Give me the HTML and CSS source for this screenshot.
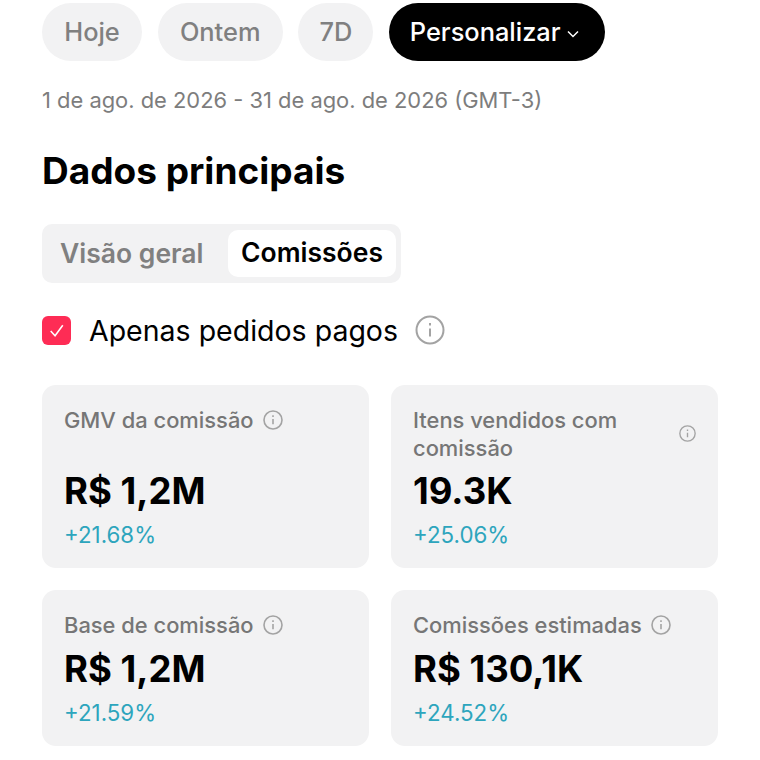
FILE: index.html
```html
<!DOCTYPE html>
<html lang="pt-BR">

<head>
    <meta charset="UTF-8">
    <meta name="viewport" content="width=device-width, initial-scale=1.0">
    <title>Dados principais</title>
    <link rel="stylesheet" href="styles.css">
</head>

<body>
    <main>
        <div class="pills">
            <button class="pill pill-hoje">Hoje</button>
            <button class="pill pill-ontem">Ontem</button>
            <button class="pill pill-7d">7D</button>
            <button class="pill pill-active">Personalizar
                <svg class="chevron" viewBox="0 0 12 8"><path d="M1 1.5l5 5 5-5" /></svg>
            </button>
        </div>

        <p class="range">1 de ago. de 2026 - 31 de ago. de 2026 (GMT-3)</p>

        <h1>Dados principais</h1>

        <div class="tabs">
            <span class="tab">Visão geral</span>
            <span class="tab tab-active">Comissões</span>
        </div>

        <div class="paid">
            <span class="check">
                <svg viewBox="0 0 30 30"><path d="M9 15.5l4.5 5L21.5 9.5" /></svg>
            </span>
            <span class="paid-label">Apenas pedidos pagos</span>
            <svg class="info info-big" viewBox="0 0 30 30">
                <circle cx="15" cy="15" r="13.5" />
                <path d="M15 13.5v8M15 8v2.4" />
            </svg>
        </div>

        <div class="cards">
            <div class="card card-tall">
                <div class="card-title">
                    <span>GMV da comissão</span>
                    <svg class="info" viewBox="0 0 30 30"><circle cx="15" cy="15" r="13.5" /><path d="M15 13.5v8M15 8v2.4" /></svg>
                </div>
                <div class="value value-low">R$ 1,2M</div>
                <div class="delta">+21.68%</div>
            </div>
            <div class="card card-tall">
                <div class="card-title">
                    <span>Itens vendidos com comissão</span>
                    <svg class="info info-small" viewBox="0 0 30 30"><circle cx="15" cy="15" r="13.5" /><path d="M15 13.5v8M15 8v2.4" /></svg>
                </div>
                <div class="value">19.3K</div>
                <div class="delta">+25.06%</div>
            </div>
            <div class="card">
                <div class="card-title">
                    <span>Base de comissão</span>
                    <svg class="info" viewBox="0 0 30 30"><circle cx="15" cy="15" r="13.5" /><path d="M15 13.5v8M15 8v2.4" /></svg>
                </div>
                <div class="value">R$ 1,2M</div>
                <div class="delta">+21.59%</div>
            </div>
            <div class="card">
                <div class="card-title">
                    <span>Comissões estimadas</span>
                    <svg class="info" viewBox="0 0 30 30"><circle cx="15" cy="15" r="13.5" /><path d="M15 13.5v8M15 8v2.4" /></svg>
                </div>
                <div class="value">R$ 130,1K</div>
                <div class="delta">+24.52%</div>
            </div>
        </div>
    </main>
</body>

</html>
```

FILE: styles.css
```css
body {
    margin: 0;
    background: #fff;
    color: #000;
    font-family: "Inter", "Liberation Sans", sans-serif;
}

main {
    width: 677px;
    padding: 3px 0 0 42px;
}

.pills {
    display: flex;
    gap: 15.7px;
}

.pill {
    height: 58px;
    padding: 0 0 2px;
    border: none;
    border-radius: 29px;
    background: #f2f2f3;
    color: #808080;
    font-family: inherit;
    font-size: 25.4px;
    font-weight: 500;
}

.pill-hoje {
    width: 100px;
}

.pill-ontem {
    width: 125px;
}

.pill-7d {
    width: 75px;
}

.pill-active {
    width: 216px;
    padding-right: 5px;
    background: #000;
    color: #fff;
}

.chevron {
    width: 12px;
    height: 8px;
    vertical-align: 3px;
    fill: none;
    stroke: #fff;
    stroke-width: 1.5;
}

.range {
    margin: 26px 0 0;
    color: #7d7d7d;
    font-size: 21.9px;
    line-height: 26px;
}

h1 {
    margin: 36px 0 0;
    font-size: 37px;
    line-height: 44px;
    font-weight: 700;
}

.tabs {
    display: flex;
    align-items: center;
    justify-content: space-between;
    width: 359px;
    height: 59px;
    box-sizing: border-box;
    margin-top: 31px;
    padding: 0 5px 0 18px;
    border-radius: 10px;
    background: #f2f2f3;
}

.tab {
    padding-bottom: 2px;
    color: #808080;
    font-size: 26.5px;
    font-weight: 600;
}

.tab-active {
    box-sizing: border-box;
    width: 168px;
    height: 47px;
    border-radius: 10px;
    background: #fff;
    color: #000;
    line-height: 45px;
    text-align: center;
}

.paid {
    display: flex;
    align-items: center;
    height: 30px;
    margin-top: 32px;
}

.check {
    display: flex;
    width: 29px;
    height: 29px;
    border-radius: 6px;
    background: #fe2c55;
}

.check svg {
    fill: none;
    stroke: #fff;
    stroke-width: 1.6;
}

.paid-label {
    margin-left: 18px;
    font-size: 28.5px;
}

.info {
    flex: none;
    width: 20px;
    height: 20px;
    margin-left: 9px;
    fill: none;
    stroke: #a3a3a3;
    stroke-width: 2.4;
}

.info-big {
    width: 30px;
    height: 30px;
    margin-left: 17px;
    stroke-width: 2;
}

.info-small {
    width: 17px;
    height: 17px;
    margin: 0 0 2px 46px;
}

.cards {
    display: grid;
    grid-template-columns: 327px 327px;
    grid-template-rows: 183px 156px;
    gap: 22px;
    margin-top: 40px;
}

.card {
    box-sizing: border-box;
    padding: 21px 22px 0;
    border-radius: 14px;
    background: #f2f2f3;
}

.card-title {
    display: flex;
    align-items: center;
    min-height: 28px;
    color: #767676;
    font-size: 21.9px;
    font-weight: 500;
    line-height: 28px;
}

.value {
    margin-top: 8px;
    font-size: 36.5px;
    font-weight: 700;
    line-height: 44px;
}

.card-tall .value {
    margin-top: 7px;
}

.card-tall .value-low {
    margin-top: 35px;
}

.delta {
    margin-top: 9px;
    color: #2da5bd;
    font-size: 22.3px;
    line-height: 26px;
}
```
